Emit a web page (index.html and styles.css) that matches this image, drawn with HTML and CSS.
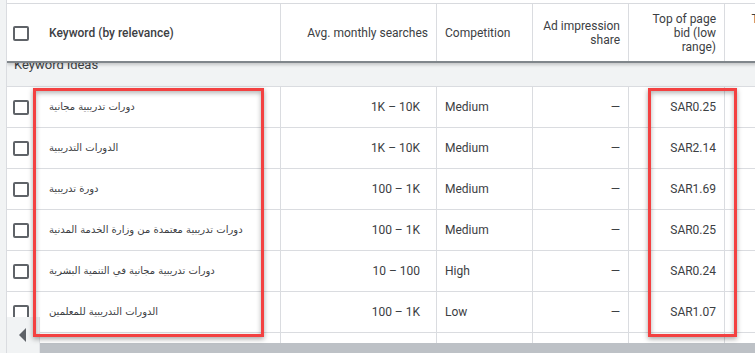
FILE: index.html
```html
<!DOCTYPE html>
<html>
<head>
<meta charset="utf-8">
<link rel="stylesheet" href="styles.css">
</head>
<body>
<div class="page">
  <div class="side"></div>
  <div class="main">
    <div class="table">
      <div class="row head">
        <div class="cell c1"><span class="cb"></span><span class="kwh">Keyword (by relevance)</span></div>
        <div class="cell c2 right">Avg. monthly searches</div>
        <div class="cell c3">Competition</div>
        <div class="cell c4 right">Ad impression<br>share</div>
        <div class="cell c5 right">Top of page<br>bid (low<br>range)</div>
        <div class="cell c6 right">Top of page<br>bid (high<br>range)</div>
      </div>
      <div class="group"><span class="group-label">Keyword ideas</span></div>
      <div class="row data">
        <div class="cell c1"><span class="cb"></span><span class="kw">دورات تدريبية مجانية</span></div>
        <div class="cell c2 right pr16">1K – 10K</div>
        <div class="cell c3">Medium</div>
        <div class="cell c4 right">—</div>
        <div class="cell c5 right">SAR0.25</div>
        <div class="cell c6 right">SAR2.81</div>
      </div>
      <div class="row data">
        <div class="cell c1"><span class="cb"></span><span class="kw">الدورات التدريبية</span></div>
        <div class="cell c2 right pr16">1K – 10K</div>
        <div class="cell c3">Medium</div>
        <div class="cell c4 right">—</div>
        <div class="cell c5 right">SAR2.14</div>
        <div class="cell c6 right">SAR9.40</div>
      </div>
      <div class="row data">
        <div class="cell c1"><span class="cb"></span><span class="kw">دورة تدريبية</span></div>
        <div class="cell c2 right pr16">100 – 1K</div>
        <div class="cell c3">Medium</div>
        <div class="cell c4 right">—</div>
        <div class="cell c5 right">SAR1.69</div>
        <div class="cell c6 right">SAR7.12</div>
      </div>
      <div class="row data">
        <div class="cell c1"><span class="cb"></span><span class="kw">دورات تدريبية معتمدة من وزارة الخدمة المدنية</span></div>
        <div class="cell c2 right pr16">100 – 1K</div>
        <div class="cell c3">Medium</div>
        <div class="cell c4 right">—</div>
        <div class="cell c5 right">SAR0.25</div>
        <div class="cell c6 right">SAR1.50</div>
      </div>
      <div class="row data">
        <div class="cell c1"><span class="cb"></span><span class="kw">دورات تدريبية مجانية في التنمية البشرية</span></div>
        <div class="cell c2 right pr16">10 – 100</div>
        <div class="cell c3">High</div>
        <div class="cell c4 right">—</div>
        <div class="cell c5 right">SAR0.24</div>
        <div class="cell c6 right">SAR1.10</div>
      </div>
      <div class="row data">
        <div class="cell c1"><span class="cb"></span><span class="kw">الدورات التدريبية للمعلمين</span></div>
        <div class="cell c2 right pr16">100 – 1K</div>
        <div class="cell c3">Low</div>
        <div class="cell c4 right">—</div>
        <div class="cell c5 right">SAR1.07</div>
        <div class="cell c6 right">SAR4.33</div>
      </div>
      <div class="row data">
        <div class="cell c1"></div>
        <div class="cell c2"></div>
        <div class="cell c3"></div>
        <div class="cell c4"></div>
        <div class="cell c5"></div>
        <div class="cell c6"></div>
      </div>
    </div>
  </div>
  <div class="scroll-btn"><span class="arrow"></span></div>
  <div class="scrollbar"></div>
  <div class="hl hl-left"></div>
  <div class="hl hl-right"></div>
</div>
</body>
</html>
```

FILE: styles.css
```css
html, body {
  margin: 0;
  padding: 0;
  background: #ffffff;
  overflow: hidden;
}
body {
  font-family: Roboto, "Liberation Sans", sans-serif;
  font-size: 12px;
  color: #3c4043;
}
.page {
  position: relative;
  display: flex;
  width: 755px;
  height: 353px;
  overflow: hidden;
}
.side {
  width: 6px;
  flex: none;
  background: #f1f3f4;
  border-right: 1px solid #dadce0;
}
.main {
  flex: 1;
  overflow: hidden;
  padding-top: 3px;
}
.table {
  width: 900px;
  border-top: 1px solid #dadce0;
}
.row {
  display: grid;
  grid-template-columns: 274px 156px 96px 96px 96px 99px;
}
.cell {
  box-sizing: border-box;
  border-right: 1px solid #dadce0;
  display: flex;
  align-items: center;
  padding: 0 8px;
  line-height: 14px;
  white-space: nowrap;
}
.right {
  justify-content: flex-end;
  text-align: right;
}
.pr16 { padding-right: 16px; }
.head {
  position: relative;
  z-index: 2;
  height: 59px;
  box-sizing: border-box;
  border-bottom: 2px solid #80868b;
  box-shadow: 0 2px 3px rgba(0,0,0,0.18);
  background: #fff;
}
.head .cell { padding-top: 1px; }
.head .c3 { padding-left: 8px; }
.c1 { padding-left: 6px; }
.cb {
  box-sizing: border-box;
  width: 16px;
  height: 15px;
  border: 2px solid #5f6368;
  border-radius: 2px;
  flex: none;
  margin-right: 20px;
}
.kwh {
  font-weight: 500;
  color: #3c4043;
}
.kw {
  font-family: "DejaVu Sans", sans-serif;
  font-size: 10px;
  color: #3c4043;
  direction: rtl;
  unicode-bidi: isolate;
}
.group {
  position: relative;
  z-index: 1;
  height: 24px;
  box-sizing: border-box;
  background: #f1f3f4;
  border-bottom: 1px solid #dadce0;
  overflow: hidden;
  padding-left: 7px;
}
.group-label {
  display: block;
  font-size: 13px;
  line-height: 15px;
  margin-top: -6px;
  color: #3c4043;
}
.data {
  height: 41px;
  box-sizing: border-box;
  border-bottom: 1px solid #dadce0;
}
.data .c3 { padding-left: 8px; }
.scroll-btn {
  position: absolute;
  left: 7px;
  top: 317px;
  width: 33px;
  height: 36px;
  box-sizing: border-box;
  background: #f1f3f4;
  border-right: 1px solid #e3e5e8;
  z-index: 3;
  display: flex;
  align-items: center;
  justify-content: center;
}
.arrow {
  width: 0;
  height: 0;
  border-top: 7px solid transparent;
  border-bottom: 7px solid transparent;
  border-right: 7px solid #5f6368;
  margin-left: -1px;
  margin-top: 0;
}
.scrollbar {
  position: absolute;
  left: 40px;
  right: 0;
  top: 343px;
  height: 10px;
  background: #bdc1c6;
  z-index: 3;
}
.hl {
  position: absolute;
  top: 88px;
  height: 249px;
  box-sizing: border-box;
  border: 3px solid #f34141;
  box-shadow: 0 2px 5px rgba(0,0,0,0.35), inset 0 2px 5px rgba(0,0,0,0.3);
  z-index: 4;
}
.hl-left { left: 33px; width: 231px; }
.hl-right { left: 648px; width: 89px; }
```
